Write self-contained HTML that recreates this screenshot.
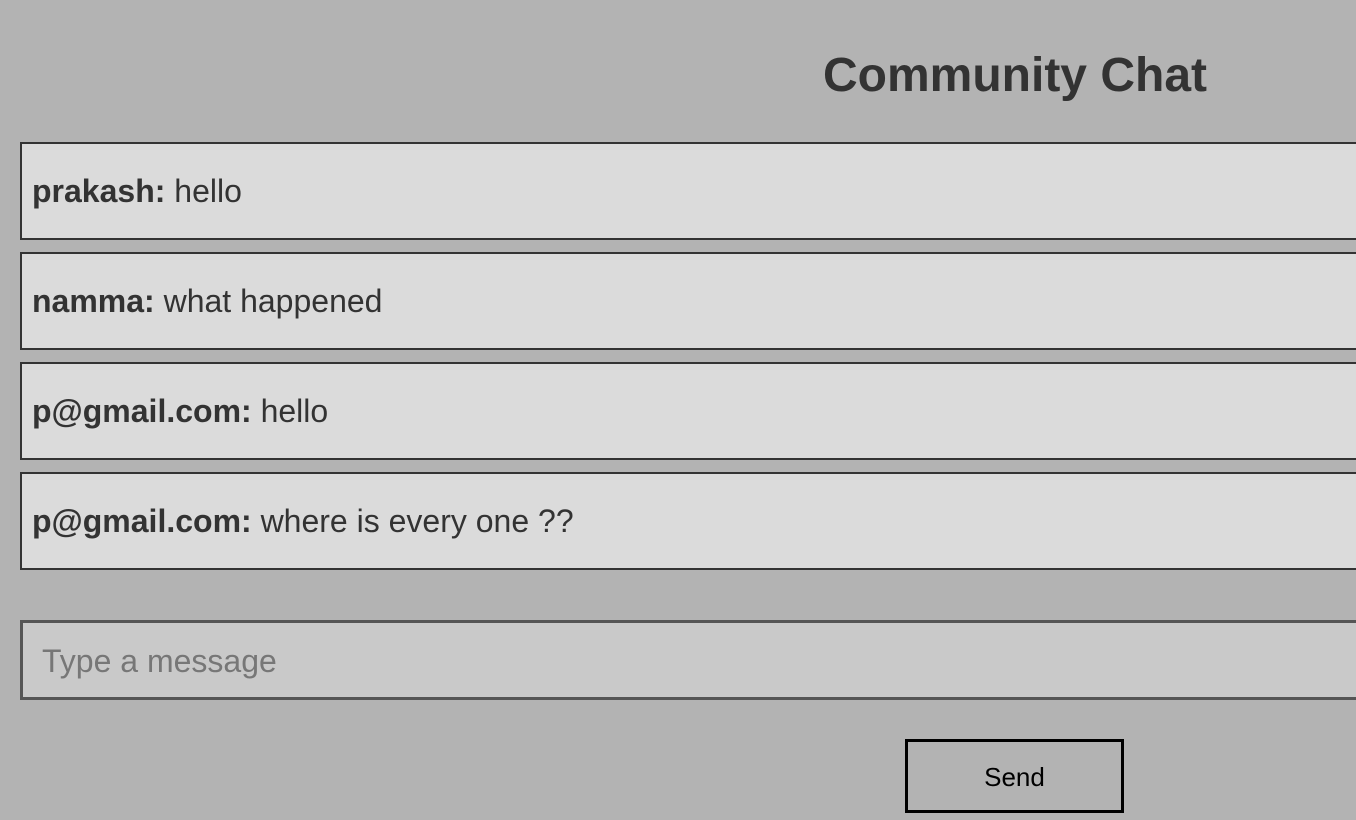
<!DOCTYPE html>
<html><head><style>
body{margin:0;width:1356px;height:820px;overflow:hidden;background:#b3b3b3;font-family:"Liberation Sans",Arial,sans-serif;color:#333;position:relative}
h1{position:absolute;left:0;width:2030px;text-align:center;top:48px;margin:0;font-size:48px;font-weight:bold;line-height:56px;color:#333}
.m{position:absolute;left:20px;width:1400px;height:94px;border:2px solid #333;background:#dbdbdb;box-sizing:content-box;font-size:32px;line-height:94px;padding-left:10px}
.m b{font-weight:bold}
.in{position:absolute;left:20px;top:620px;width:1400px;height:74px;border:3px solid #555;background:#c9c9c9;font-size:32px;line-height:76px;padding-left:19px;color:#777}
.btn{position:absolute;left:905px;top:739px;width:213px;height:68px;border:3px solid #000;font-size:26px;line-height:70px;text-align:center;color:#000}
</style></head><body>
<h1>Community Chat</h1>
<div class="m" style="top:142px"><b>prakash:</b> hello</div>
<div class="m" style="top:252px"><b>namma:</b> what happened</div>
<div class="m" style="top:362px"><b>p@gmail.com:</b> hello</div>
<div class="m" style="top:472px"><b>p@gmail.com:</b> where is every one ??</div>
<div class="in">Type a message</div>
<div class="btn">Send</div>
</body></html>
